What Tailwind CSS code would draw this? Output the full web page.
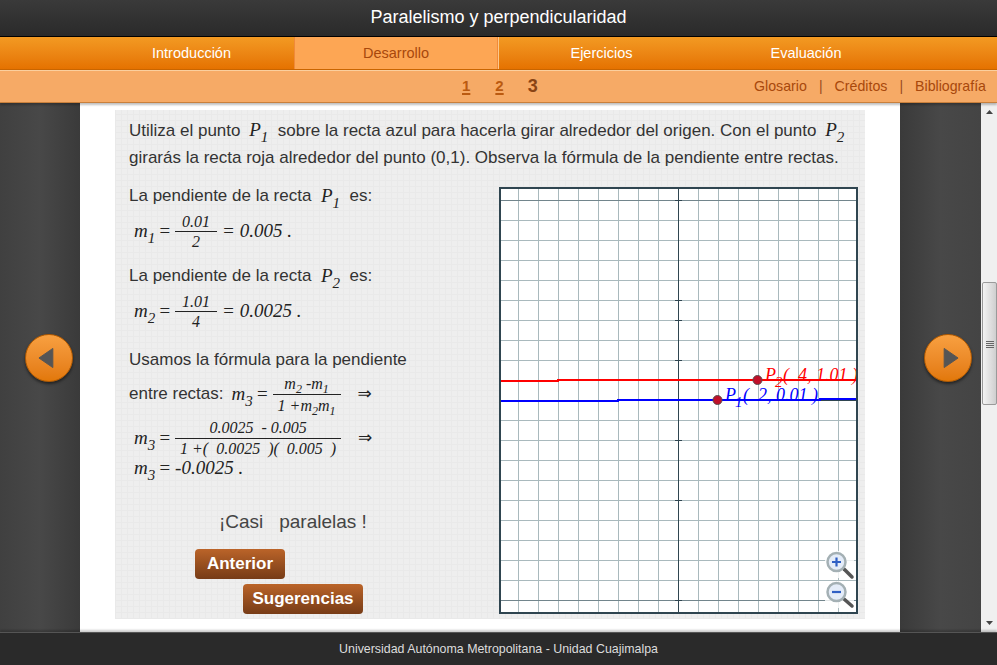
<!DOCTYPE html>
<html lang="es">
<head>
<meta charset="utf-8">
<title>Paralelismo y perpendicularidad</title>
<script src="https://cdn.jsdelivr.net/npm/@tailwindcss/browser@4"></script>
</head>
<body class="overflow-hidden">
<div class="flex h-[665px] w-[997px] flex-col font-['Liberation_Sans',Arial,sans-serif] text-[17px] text-[#333]">

    <!-- titulo -->
    <header class="flex h-[37px] shrink-0 items-center justify-center border-b border-black bg-gradient-to-b from-[#3a3a3a] to-[#2a2a2a] pb-[2px] text-[18px] text-white">
        Paralelismo y perpendicularidad
    </header>

    <!-- menu principal -->
    <nav class="flex h-[33px] shrink-0 border-b border-[#c96500] bg-gradient-to-b from-[#f39a22] to-[#e57200] pl-[89px] text-[14.5px] text-white">
        <a class="flex w-[205px] items-center justify-center pt-[2px]">Introducción</a>
        <a class="flex w-[204px] items-center justify-center border-x border-[#f08a3a] bg-[#fda654] pt-[2px] text-[#a8480c]">Desarrollo</a>
        <a class="flex w-[206px] items-center justify-center border-l border-[#fbc88c] pt-[2px]">Ejercicios</a>
        <a class="flex w-[204px] items-center justify-center pt-[2px]">Evaluación</a>
    </nav>

    <!-- submenu -->
    <div class="relative z-10 flex h-[33px] shrink-0 items-center border-t border-b border-t-[#fbcf9e] border-b-[#c9803c] bg-[#f6aa66] text-[14.2px] text-[#a8480c] shadow-[0_2px_2px_rgba(0,0,0,0.25)]">
        <div class="ml-[462px] flex items-center font-bold">
            <a class="text-[15px] text-[#bb5a10] underline decoration-2 underline-offset-2">1</a>
            <a class="ml-[25px] text-[15px] text-[#bb5a10] underline decoration-2 underline-offset-2">2</a>
            <span class="ml-[24px] text-[18px] text-[#8a4414]">3</span>
        </div>
        <div class="ml-auto mr-[11px] flex items-center">
            <a>Glosario</a>
            <span class="mx-[12px] text-[14px] text-[#9a4a20]">|</span>
            <a>Créditos</a>
            <span class="mx-[12px] text-[14px] text-[#9a4a20]">|</span>
            <a>Bibliografía</a>
        </div>
    </div>

    <!-- contenido -->
    <main class="flex h-[529px] shrink-0 bg-[#464646]">
        <div class="flex w-[80px] shrink-0 items-center bg-gradient-to-r from-[#404040] via-[#484848] to-[#3a3a3a] pb-[20px] pl-[25px]">
            <button class="flex h-[48px] w-[48px] items-center justify-center rounded-full border border-[#b35a00] bg-gradient-to-b from-[#f8a040] to-[#e27808] shadow-[0_2px_3px_rgba(0,0,0,0.5)]">
                <svg width="48" height="48" viewBox="0 0 48 48"><path d="M13.5 24 L28 14 L28 34 Z" fill="#555" stroke="#555" stroke-linejoin="round"/></svg>
            </button>
        </div>

        <div class="w-[820px] shrink-0 bg-white px-[35px] pt-[7px]">
            <section class="h-[509px] w-[750px] bg-[#eeeeee] bg-[repeating-linear-gradient(0deg,#e9e9e9_0,#e9e9e9_1px,transparent_1px,transparent_6px),repeating-linear-gradient(90deg,#e9e9e9_0,#e9e9e9_1px,transparent_1px,transparent_6px)] pl-[14px] pt-[6px]">
                <p class="h-[55px] w-[730px] whitespace-nowrap text-[17px] leading-[27px]">
                    Utiliza el punto <i class="ml-[4px] font-['Liberation_Serif',serif] text-[19px] text-[#222]">P<sub class="bottom-[-6px] text-[15px]">1</sub></i>&nbsp; sobre la recta azul para hacerla girar alrededor del origen. Con el punto <i class="ml-[4px] font-['Liberation_Serif',serif] text-[19px] text-[#222]">P<sub class="bottom-[-6px] text-[15px]">2</sub></i><br>
                    girarás la recta roja alrededor del punto (0,1). Observa la fórmula de la pendiente entre rectas.
                </p>
                <div class="mt-[16px] flex">
                    <div class="flex w-[370px] shrink-0 flex-col font-normal">
                        <p class="flex h-[16px] items-center whitespace-pre pt-[2px]">La pendiente de la recta  <i class="font-['Liberation_Serif',serif] text-[19px] text-[#222]">P<sub class="bottom-[-6px] text-[15px]">1</sub></i>  es:</p>

                        <div class="mt-[8px] ml-[5px] flex h-[40px] items-center font-['Liberation_Serif',serif] text-[19px] text-[#222] italic">
                            <span>m<sub class="bottom-[-6px] text-[15px]">1</sub></span>
                            <span class="ml-[3px] mr-[4px]">=</span>
                            <span class="flex flex-col items-center text-[16px] leading-[19px]"><span class="w-[42px] border-b border-[#222] text-center">0.01</span><span>2</span></span>
                            <span class="ml-[5px] whitespace-pre">= 0.005 .</span>
                        </div>

                        <p class="mt-[16px] flex h-[16px] items-center whitespace-pre pt-[2px]">La pendiente de la recta  <i class="font-['Liberation_Serif',serif] text-[19px] text-[#222]">P<sub class="bottom-[-6px] text-[15px]">2</sub></i>  es:</p>

                        <div class="mt-[8px] ml-[5px] flex h-[40px] items-center font-['Liberation_Serif',serif] text-[19px] text-[#222] italic">
                            <span>m<sub class="bottom-[-6px] text-[15px]">2</sub></span>
                            <span class="ml-[3px] mr-[4px]">=</span>
                            <span class="flex flex-col items-center text-[16px] leading-[19px]"><span class="w-[42px] border-b border-[#222] text-center">1.01</span><span>4</span></span>
                            <span class="ml-[5px] whitespace-pre">= 0.0025 .</span>
                        </div>

                        <p class="mt-[20px] flex h-[16px] items-center pt-[2px]">Usamos la fórmula para la pendiente</p>

                        <div class="mt-[5px] flex h-[44px] items-center">
                            <span>entre rectas:</span>
                            <span class="ml-[8px] flex items-center font-['Liberation_Serif',serif] text-[19px] text-[#222] italic">
                                <span>m<sub class="bottom-[-6px] text-[15px]">3</sub></span>
                                <span class="ml-[3px] mr-[4px]">=</span>
                                <span class="flex flex-col items-center text-[16px] leading-[21px]"><span class="w-[68px] whitespace-nowrap border-b border-[#222] text-center">m<sub class="bottom-[-4px] text-[12px]">2</sub> -m<sub class="bottom-[-4px] text-[12px]">1</sub></span><span class="whitespace-nowrap">1 +m<sub class="bottom-[-4px] text-[12px]">2</sub>m<sub class="bottom-[-4px] text-[12px]">1</sub></span></span>
                            </span>
                            <span class="ml-[17px] font-['DejaVu_Sans',sans-serif] text-[17px] text-[#222]">⇒</span>
                        </div>

                        <div class="mt-[2px] ml-[5px] flex h-[40px] items-center font-['Liberation_Serif',serif] text-[19px] text-[#222] italic">
                            <span>m<sub class="bottom-[-6px] text-[15px]">3</sub></span>
                            <span class="ml-[3px] mr-[4px]">=</span>
                            <span class="flex flex-col items-center text-[16px] leading-[20px]"><span class="w-[166px] whitespace-pre border-b border-[#222] text-center">0.0025  - 0.005</span><span class="whitespace-pre">1 +(  0.0025  )(  0.005  )</span></span>
                            <span class="ml-[17px] font-['DejaVu_Sans',sans-serif] text-[17px] not-italic">⇒</span>
                        </div>

                        <div class="mt-[2px] ml-[5px] flex h-[16px] items-center whitespace-pre font-['Liberation_Serif',serif] text-[19px] text-[#222] italic">
                            <span>m<sub class="bottom-[-6px] text-[15px]">3</sub></span>
                            <span class="ml-[3px] mr-[4px]">=</span>
                            <span>-0.0025 .</span>
                        </div>

                        <p class="mt-[36px] ml-[90px] flex h-[20px] items-center whitespace-pre text-[19px] text-[#444]">¡Casi   paralelas !</p>

                        <button class="mt-[17px] ml-[66px] h-[30px] w-[90px] rounded-[4px] bg-gradient-to-b from-[#bb6429] to-[#773c17] text-[17px] font-bold text-white">Anterior</button>
                        <button class="mt-[5px] ml-[114px] h-[30px] w-[120px] rounded-[4px] bg-gradient-to-b from-[#bb6429] to-[#773c17] text-[17px] font-bold text-white">Sugerencias</button>
                    </div>

                    <!-- grafica -->
                    <svg class="shrink-0" width="360" height="428" viewBox="499 187 360 428" xmlns="http://www.w3.org/2000/svg">
                        <rect x="499" y="187" width="359" height="427" fill="#fff"/>
                        <g stroke="#a9b9bd" stroke-width="1">
                            <path d="M518.5 187V614M538.5 187V614M558.5 187V614M578.5 187V614M598.5 187V614M618.5 187V614M638.5 187V614M658.5 187V614M698.5 187V614M718.5 187V614M738.5 187V614M758.5 187V614M778.5 187V614M798.5 187V614M818.5 187V614M838.5 187V614"/>
                            <path d="M499 220.5H858M499 240.5H858M499 260.5H858M499 280.5H858M499 300.5H858M499 320.5H858M499 340.5H858M499 360.5H858M499 380.5H858M499 420.5H858M499 440.5H858M499 460.5H858M499 480.5H858M499 500.5H858M499 520.5H858M499 540.5H858M499 560.5H858M499 580.5H858"/>
                        </g>
                        <path d="M499 200.5H858M499 600.5H858" stroke="#72858c" stroke-width="1"/>
                        <path d="M678.5 187V614" stroke="#2f4550" stroke-width="1"/>
                        <path d="M499 400.5H858" stroke="#2f4550" stroke-width="1"/>
                        <!-- marcas do eixo -->
                        <path d="M675 200.5H682M675 300.5H682M675 320.5H682M675 360.5H682M675 440.5H682M675 500.5H682M675 600.5H682" stroke="#2f4550" stroke-width="1"/>

                        <path d="M499 381H558V380H858" fill="none" stroke="#f00" stroke-width="2"/>
                        <path d="M499 401H618V400H820V399H858" fill="none" stroke="#00f" stroke-width="2"/>

                        <g font-family="'Liberation Serif',serif" font-style="italic" font-size="18">
                            <text x="765" y="381" fill="#f00">P<tspan font-size="15" x="775" dy="6">2</tspan><tspan x="783" dy="-6">(&#160;&#160;4,&#160;1.01&#160;)</tspan></text>
                            <text x="725" y="401" fill="#00f">P<tspan font-size="15" x="735" dy="6">1</tspan><tspan x="743" dy="-6">(&#160;&#160;2,&#160;0.01&#160;)</tspan></text>
                        </g>
                        <circle cx="757.5" cy="380" r="4.5" fill="#c0102a" stroke="#5a4a4a" stroke-width="1"/>
                        <circle cx="717.5" cy="400" r="4.5" fill="#c0102a" stroke="#5a4a4a" stroke-width="1"/>

                        <!-- lupas -->
                        <g>
                            <rect x="825" y="551" width="29" height="27" fill="#fff" fill-opacity="0.8"/>
                            <path d="M844 569L852 577" stroke="#555" stroke-width="3.5" stroke-linecap="round"/>
                            <circle cx="836.5" cy="562" r="9" fill="#e4ecf8" stroke="#a4b0b4" stroke-width="2.5"/>
                            <path d="M832 562H841M836.5 557.5V566.5" stroke="#2f5fc4" stroke-width="2.2"/>
                        </g>
                        <g>
                            <rect x="825" y="581" width="29" height="27" fill="#fff" fill-opacity="0.8"/>
                            <path d="M844 599L852 606" stroke="#555" stroke-width="3.5" stroke-linecap="round"/>
                            <circle cx="836.5" cy="592" r="9" fill="#e4ecf8" stroke="#a4b0b4" stroke-width="2.5"/>
                            <path d="M832 592H841" stroke="#2f5fc4" stroke-width="2.2"/>
                        </g>
                        <rect x="500" y="188" width="357" height="425" fill="none" stroke="#2f4550" stroke-width="2"/>
                    </svg>
                </div>
            </section>
        </div>

        <div class="flex w-[81px] shrink-0 items-center bg-gradient-to-r from-[#3a3a3a] via-[#484848] to-[#444] pb-[20px] pl-[24px]">
            <button class="flex h-[48px] w-[48px] items-center justify-center rounded-full border border-[#b35a00] bg-gradient-to-b from-[#f8a040] to-[#e27808] shadow-[0_2px_3px_rgba(0,0,0,0.5)]">
                <svg width="48" height="48" viewBox="0 0 48 48"><path d="M20 14 L34.5 24 L20 34 Z" fill="#555" stroke="#555" stroke-linejoin="round"/></svg>
            </button>
        </div>

        <!-- barra de rolagem -->
        <div class="flex w-[16px] shrink-0 flex-col items-center bg-[#f0f0f0]">
            <svg class="mt-[7px]" width="9" height="5" viewBox="0 0 9 5"><path d="M4.5 0L8 4H1Z" fill="#444"/></svg>
            <div class="ml-[1px] mt-[167px] flex h-[123px] w-[15px] items-center justify-center rounded-[2px] border border-[#9a9a9a] bg-gradient-to-r from-[#f4f4f4] to-[#cfcfcf]">
                <svg width="8" height="8" viewBox="0 0 8 8"><path d="M0 1.5H8M0 3.5H8M0 5.5H8M0 7.5H8" stroke="#666" stroke-width="1"/></svg>
            </div>
            <svg class="mt-auto mb-[6px]" width="9" height="5" viewBox="0 0 9 5"><path d="M1 0H8L4.5 4Z" fill="#444"/></svg>
        </div>
    </main>

    <!-- rodape -->
    <footer class="relative flex h-[33px] shrink-0 items-center justify-center border-t border-[#555] bg-[#2a2a2a] text-[12.4px] text-[#ddd] shadow-[0_-2px_2px_rgba(0,0,0,0.2)]">
        Universidad Autónoma Metropolitana - Unidad Cuajimalpa
    </footer>
</div>
</body>
</html>
